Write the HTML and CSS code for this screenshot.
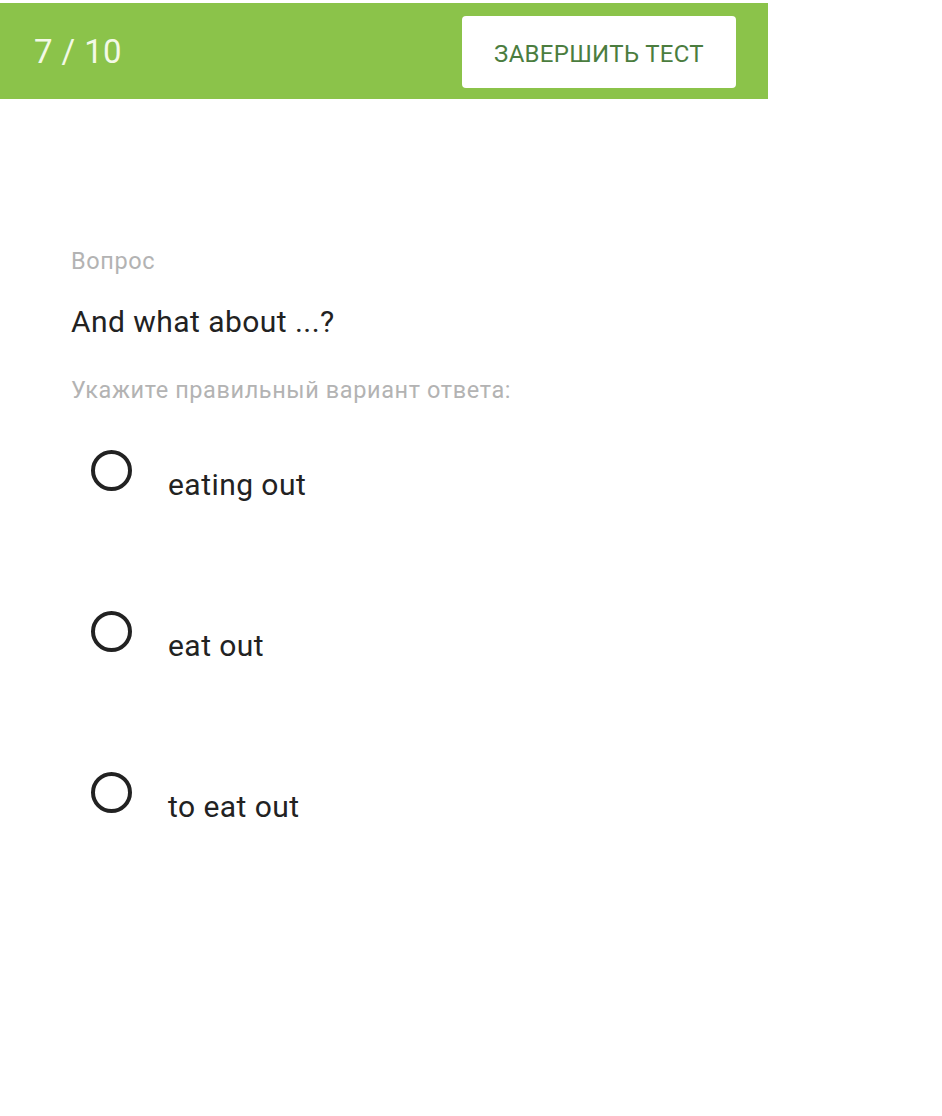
FILE: index.html
```html
<!DOCTYPE html>
<html lang="ru">
<head>
<meta charset="utf-8">
<title>Тест</title>
<link rel="stylesheet" href="styles.css">
</head>
<body>
<div class="page">
  <header class="bar">
    <div class="counter">7 / 10</div>
    <button class="finish">ЗАВЕРШИТЬ ТЕСТ</button>
  </header>
  <main class="content">
    <div class="label">Вопрос</div>
    <div class="question">And what about ...?</div>
    <div class="hint">Укажите правильный вариант ответа:</div>
    <ul class="options">
      <li class="option"><span class="radio"></span><span class="opt-text">eating out</span></li>
      <li class="option"><span class="radio"></span><span class="opt-text">eat out</span></li>
      <li class="option"><span class="radio"></span><span class="opt-text">to eat out</span></li>
    </ul>
  </main>
</div>
</body>
</html>
```

FILE: styles.css
```css
html, body {
  margin: 0;
  padding: 0;
  background: #ffffff;
}
body {
  font-family: Roboto, "Liberation Sans", Arial, sans-serif;
  color: #222222;
}
.page {
  width: 942px;
  padding-top: 3px;
}
.bar {
  width: 768px;
  height: 96px;
  background: #8bc34a;
  display: flex;
  align-items: flex-start;
  justify-content: space-between;
  box-sizing: border-box;
  padding: 13px 32px 0 34px;
}
.counter {
  font-size: 33px;
  line-height: 38px;
  letter-spacing: 0.4px;
  margin-top: 17px;
  color: #f3f9e6;
}
.finish {
  width: 274px;
  height: 72px;
  background: #ffffff;
  border: none;
  border-radius: 4px;
  font-family: Roboto, "Liberation Sans", Arial, sans-serif;
  font-size: 24px;
  letter-spacing: 0.3px;
  color: #4b7d3f;
  margin: 0;
  padding: 4px 0 0 0;
  line-height: 68px;
}
.content {
  padding: 0 0 0 71px;
  margin-top: 148px;
}
.label {
  font-size: 23.5px;
  line-height: 28px;
  letter-spacing: 0.6px;
  color: #b3b3b3;
}
.question {
  font-size: 30px;
  line-height: 36px;
  letter-spacing: 0.45px;
  margin-top: 29px;
  color: #222222;
}
.hint {
  font-size: 23.5px;
  line-height: 28px;
  letter-spacing: 0.6px;
  margin-top: 36px;
  color: #b3b3b3;
}
.options {
  list-style: none;
  margin: 46px 0 0 0;
  padding: 0 0 0 20px;
}
.option {
  display: flex;
  align-items: flex-start;
  height: 161px;
}
.radio {
  width: 41px;
  height: 41px;
  box-sizing: border-box;
  border: 4px solid #222222;
  border-radius: 50%;
  flex: none;
}
.opt-text {
  font-size: 30px;
  line-height: 36px;
  letter-spacing: 0.45px;
  margin-left: 36px;
  margin-top: 17px;
  color: #222222;
}
```
